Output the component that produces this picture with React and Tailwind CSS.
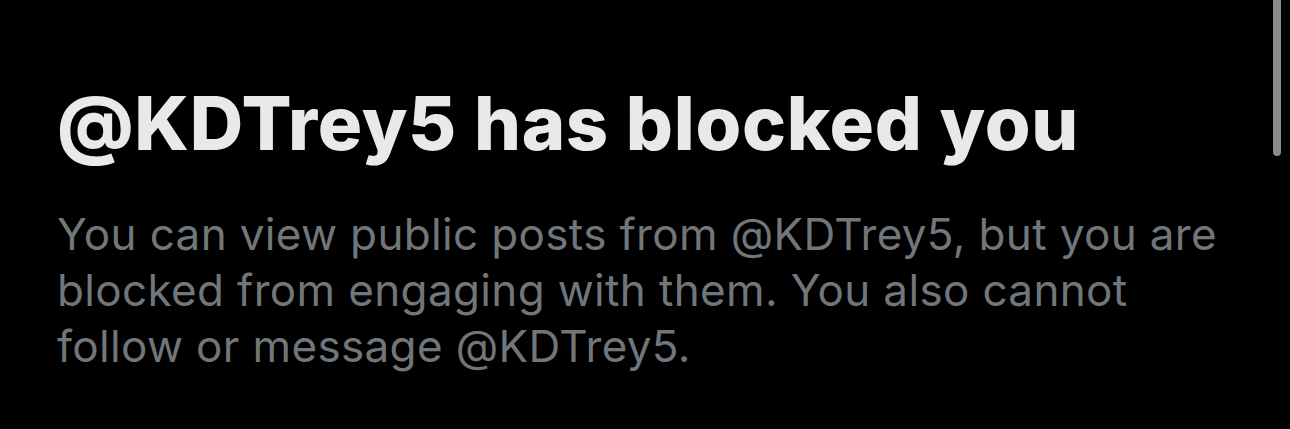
import React from 'react';

const handle = '@KDTrey5';

const BlockedNotice = () => (
    <div className="pl-[57px] pr-[63px] pt-[81px]">
        <h1 className="text-[74px] leading-[84px] font-extrabold text-[#e7e9ea] tracking-[0.7px]">
            {handle} has blocked you
        </h1>
        <p className="mt-[41px] text-[44px] leading-[56px] text-[#71767b] tracking-[0.35px]">
            You can view public posts from {handle}, but you are blocked from engaging with them. You also cannot follow or message {handle}.
        </p>
    </div>
);

const App = () => {
    return (
        <div className="relative w-[1290px] h-[429px] bg-black overflow-hidden" style={{ fontFamily: 'Inter, "Noto Sans", sans-serif' }}>
            <BlockedNotice />
            {/* scrollbar */}
            <div className="absolute right-[9px] top-0 w-[8px] h-[156px] rounded-b-full bg-[#8a8a8a]" />
        </div>
    );
};

export default App;
